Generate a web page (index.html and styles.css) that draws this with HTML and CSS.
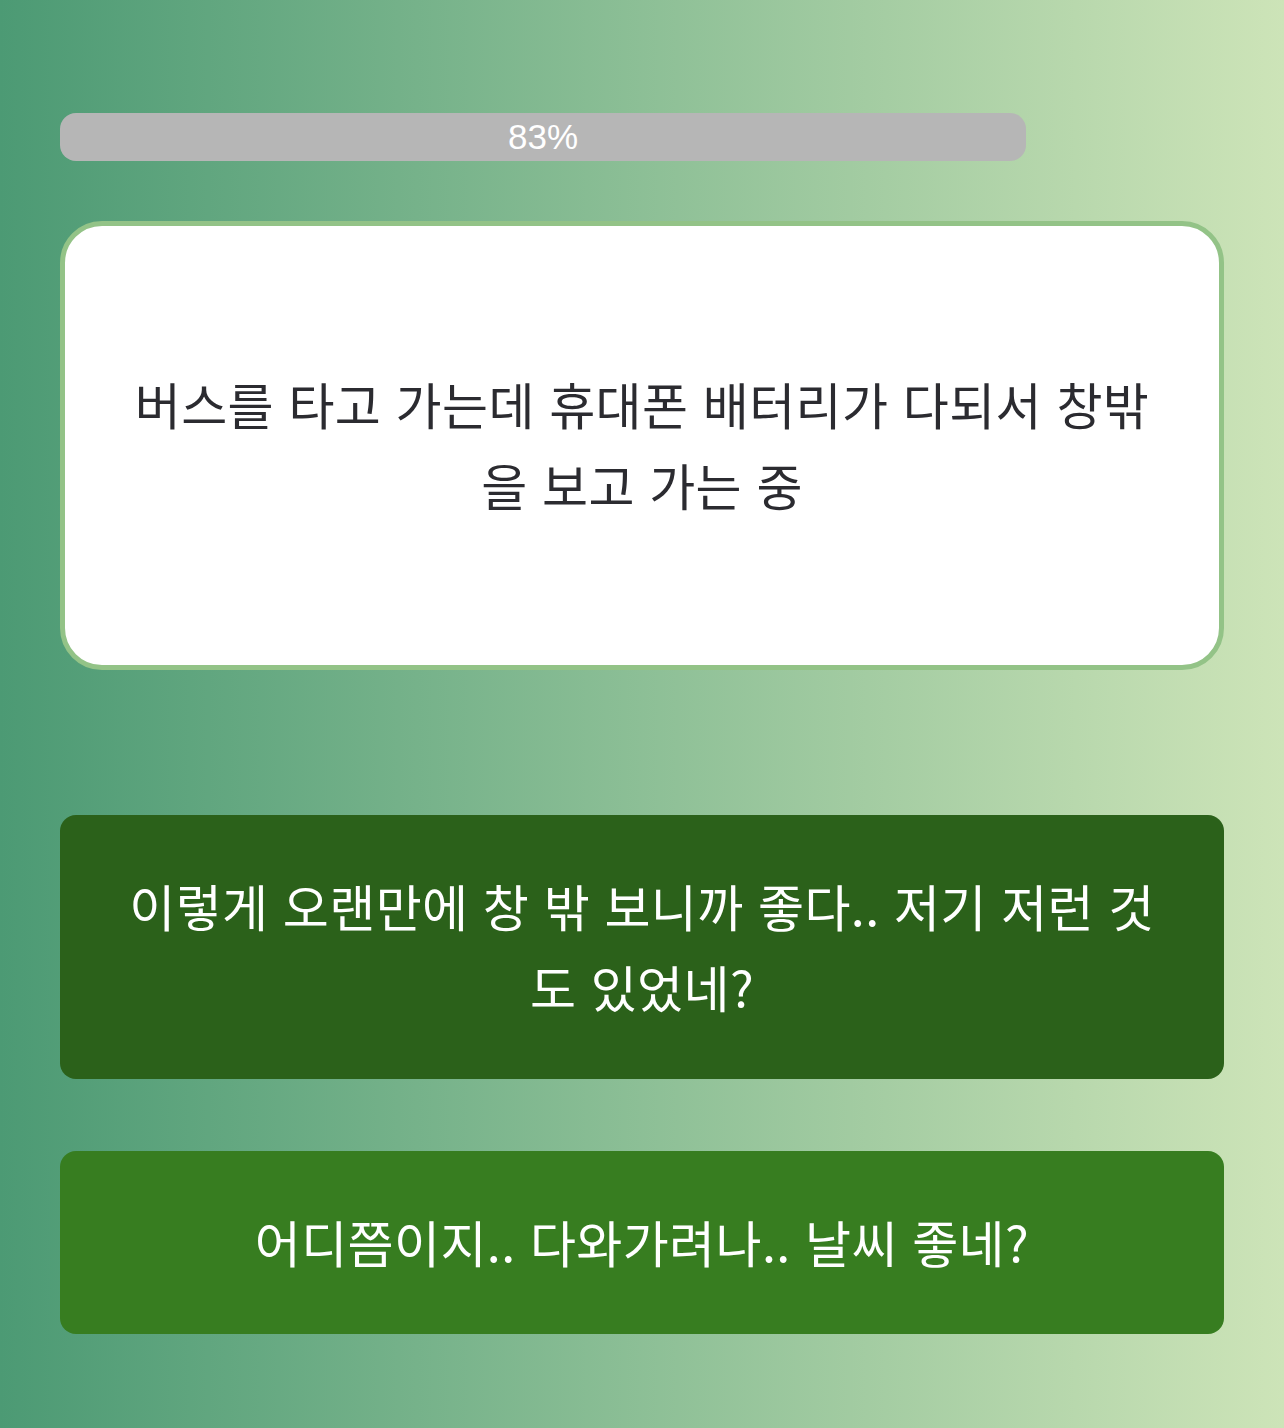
FILE: index.html
```html
<!DOCTYPE html>
<html lang="ko">
<head>
    <meta charset="UTF-8">
    <meta name="viewport" content="width=device-width, initial-scale=1.0">
    <title>Story</title>
    <link rel="stylesheet" href="styles.css">
</head>
<body>

    <div class="game">
        <!-- Progress -->
        <div class="progress">
            <div class="progress-fill" style="width: 83%;">83%</div>
        </div>

        <!-- Scene -->
        <div class="scene">
            <p>버스를 타고 가는데 휴대폰 배터리가 다되서 창밖을 보고 가는 중</p>
        </div>

        <!-- Choices -->
        <div class="choices">
            <button class="choice choice-a">이렇게 오랜만에 창 밖 보니까 좋다.. 저기 저런 것도 있었네?</button>
            <button class="choice choice-b">어디쯤이지.. 다와가려나.. 날씨 좋네?</button>
        </div>
    </div>

</body>
</html>
```

FILE: styles.css
```css
html, body {
    margin: 0;
    padding: 0;
}
body {
    min-height: 1428px;
    font-family: "Noto Sans CJK KR", "Noto Sans", sans-serif;
    background: linear-gradient(to right, #4c9a74, #cde4b8);
}
.game {
    padding: 113px 60px 94px;
}
.progress {
    height: 48px;
}
.progress-fill {
    height: 48px;
    background-color: #b6b6b6;
    border-radius: 16px;
    color: #fff;
    font-family: "Liberation Sans", Arial, sans-serif;
    font-size: 35px;
    line-height: 48px;
    text-align: center;
}
.scene {
    margin-top: 60px;
    background: #fff;
    border: 5px solid #93c387;
    border-radius: 42px;
    padding: 110px 60px 114px;
    min-height: 215px;
    display: flex;
    align-items: center;
    justify-content: center;
}
.scene p {
    margin: 0;
    font-size: 50px;
    line-height: 81px;
    letter-spacing: 0.4px;
    color: #2b2b30;
    text-align: center;
}
.choices {
    margin-top: 145px;
    display: flex;
    flex-direction: column;
    gap: 72px;
}
.choice {
    display: block;
    width: 100%;
    border: none;
    border-radius: 16px;
    padding: 50px 60px 52px;
    font-family: "Noto Sans CJK KR", "Noto Sans", sans-serif;
    font-size: 50px;
    line-height: 81px;
    letter-spacing: 0.4px;
    color: #fff;
    text-align: center;
    cursor: pointer;
}
.choice-a {
    background-color: #2b611a;
}
.choice-b {
    background-color: #377d20;
}
```
